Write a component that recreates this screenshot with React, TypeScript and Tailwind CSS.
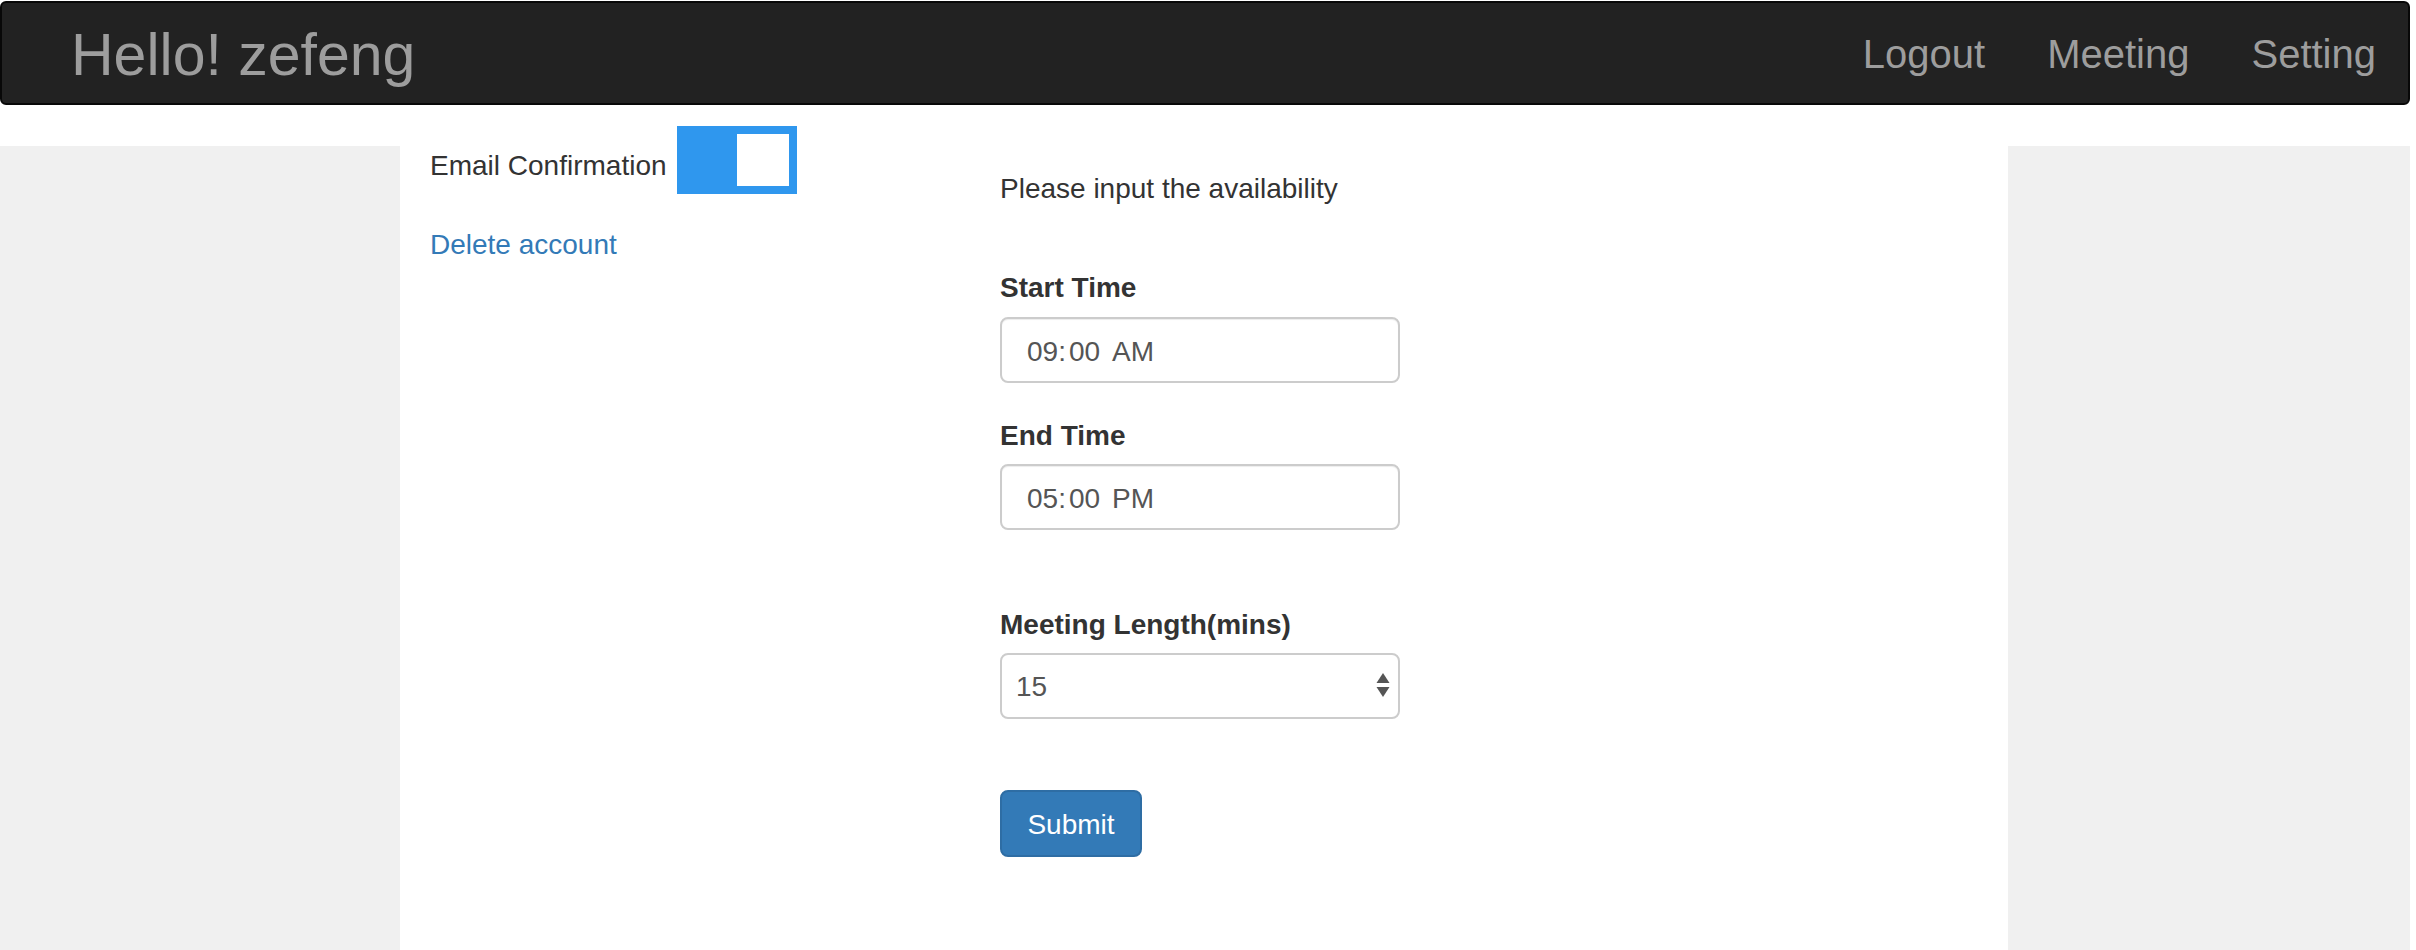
import type { ReactNode } from "react";

const FONT = "font-['Liberation_Sans',Arial,sans-serif]";

function TimeField({ h, m, ap, className }: { h: string; m: string; ap: string; className: string }) {
  return (
    <div className={`${className} flex h-[66px] w-[400px] items-center rounded-[8px] border-2 border-[#cccccc] bg-white pl-[25px] pt-[3px] text-[28px] leading-[40px] text-[#555555] shadow-[inset_0_1px_1px_rgba(0,0,0,0.075)]`}>
      <span>{h}</span>
      <span>:</span>
      <span className="ml-[3px]">{m}</span>
      <span className="ml-[12px]">{ap}</span>
    </div>
  );
}

function Label({ children, className }: { children: ReactNode; className: string }) {
  return (
    <div className={`${className} text-[28px] font-bold leading-[40px] text-[#333333]`}>
      {children}
    </div>
  );
}

export default function App() {
  return (
    <div className={`${FONT} min-h-[950px] w-[2416px] bg-white text-[#333333]`}>
      {/* Navbar */}
      <nav className="mt-[1px] flex h-[104px] w-[2410px] items-start justify-between rounded-[6px] border-2 border-[#080808] bg-[#222222]">
        <div className="mt-[23px] pl-[69px] text-[59px] leading-[59px] text-[#9d9d9d]">
          Hello! zefeng
        </div>
        <ul className="mt-[31px] flex pr-[1px] text-[40px] leading-[40px] text-[#9d9d9d]">
          <li className="px-[31px]">Logout</li>
          <li className="px-[31px]">Meeting</li>
          <li className="px-[31px]">Setting</li>
        </ul>
      </nav>

      {/* Body */}
      <div className="flex h-[845px] w-[2410px]">
        <div className="w-[400px] border-t-[41px] border-white bg-[#f0f0f0]" />

        <div className="flex w-[1608px] bg-white">
          {/* Settings column */}
          <div className="w-[600px] pl-[30px] pt-[21px]">
            <div className="flex items-start">
              <span className="mt-[20px] text-[28px] leading-[40px]">Email Confirmation</span>
              <div className="ml-[10px] flex h-[68px] w-[120px] justify-end bg-[#2f97ee] p-[8px]">
                <div className="h-[52px] w-[52px] bg-white" />
              </div>
            </div>
            <a className="mt-[31px] block text-[28px] leading-[40px] text-[#337ab7]" href="#">
              Delete account
            </a>
          </div>

          {/* Availability form */}
          <div className="pt-[64px]">
            <p className="text-[28px] leading-[40px]">Please input the availability</p>

            <Label className="mt-[59px]">Start Time</Label>
            <TimeField className="mt-[9px]" h="09" m="00" ap="AM" />

            <Label className="mt-[33px]">End Time</Label>
            <TimeField className="mt-[8px]" h="05" m="00" ap="PM" />

            <Label className="mt-[75px]">Meeting Length(mins)</Label>
            <div className="mt-[8px] flex h-[66px] w-[400px] items-center justify-between rounded-[8px] border-2 border-[#cccccc] bg-white pl-[14px] pr-[8px] text-[28px] leading-[40px] text-[#555555]">
              <span className="pt-[2px]">15</span>
              <svg width="14" height="26" viewBox="0 0 14 26" className="fill-[#555555]">
                <polygon points="7,0 13.5,10 0.5,10" />
                <polygon points="0.5,14 13.5,14 7,24" />
              </svg>
            </div>

            <button className="mt-[71px] flex h-[67px] w-[142px] items-center justify-center rounded-[8px] border-2 border-[#2e6da4] bg-[#337ab7] pt-[2px] text-[28px] leading-[40px] text-white">
              Submit
            </button>
          </div>
        </div>

        <div className="flex-1 border-t-[41px] border-white bg-[#f0f0f0]" />
      </div>
    </div>
  );
}
